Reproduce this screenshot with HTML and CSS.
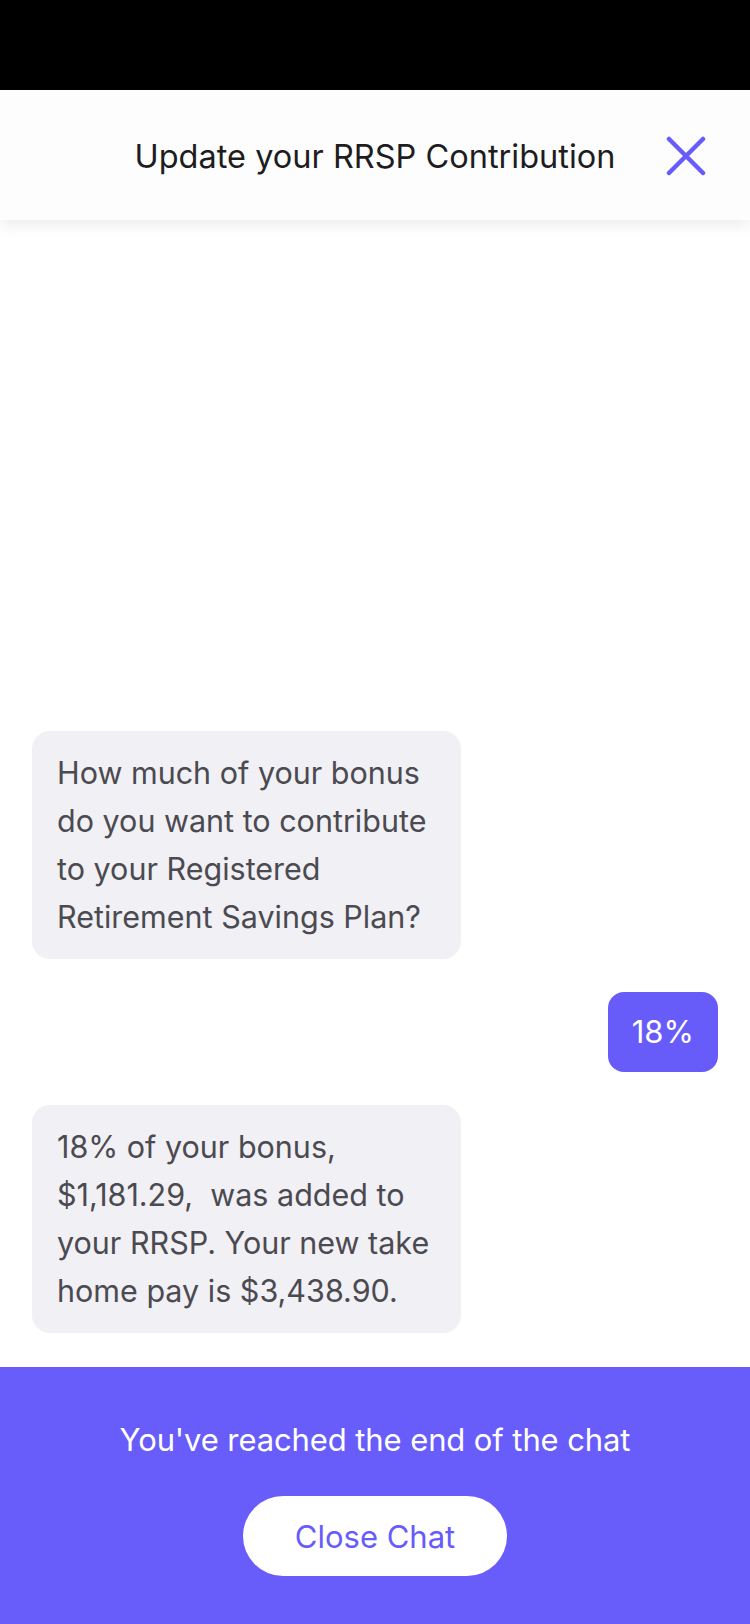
FILE: index.html
```html
<!DOCTYPE html>
<html lang="en">
<head>
<meta charset="utf-8">
<title>Update your RRSP Contribution</title>
<link rel="stylesheet" href="styles.css">
</head>
<body>
<div class="screen">
  <div class="status-bar"></div>
  <header class="header">
    <h1 class="title">Update your RRSP Contribution</h1>
    <button class="close-btn" aria-label="Close">
      <svg viewBox="0 0 40 40" width="40" height="40">
        <path d="M3 3 L37 37 M37 3 L3 37" stroke="#675cfa" stroke-width="4.5" stroke-linecap="round" fill="none"/>
      </svg>
    </button>
  </header>
  <main class="chat">
    <div class="msg bot">How much of your bonus do you want to contribute to your Registered Retirement Savings Plan?</div>
    <div class="msg user">18%</div>
    <div class="msg bot">18% of your bonus, $1,181.29,&nbsp; was added to your RRSP. Your new take home pay is $3,438.90.</div>
  </main>
  <footer class="footer">
    <p class="end-text">You've reached the end of the chat</p>
    <button class="close-chat">Close Chat</button>
  </footer>
</div>
</body>
</html>
```

FILE: styles.css
```css
* { box-sizing: border-box; }
html, body { margin: 0; padding: 0; }
body {
  font-family: Inter, "Noto Sans", "Liberation Sans", sans-serif;
  background: #ffffff;
}
.screen {
  width: 750px;
  height: 1624px;
  display: flex;
  flex-direction: column;
  overflow: hidden;
}
.status-bar {
  height: 90px;
  background: #000;
  flex: none;
}
.header {
  height: 130px;
  flex: none;
  background: #fdfdfd;
  box-shadow: 0 6px 14px rgba(0,0,0,0.07);
  display: flex;
  align-items: center;
  justify-content: center;
  position: relative;
  z-index: 1;
}
.title {
  margin: 0;
  font-weight: 400;
  font-size: 32.5px;
  color: #1d1d1f;
  padding-top: 2px;
}
.close-btn {
  position: absolute;
  right: 44px;
  top: 46px;
  width: 40px;
  height: 40px;
  padding: 0;
  border: 0;
  background: none;
}
.close-btn svg { display: block; }
.chat {
  flex: 1;
  display: flex;
  flex-direction: column;
  justify-content: flex-end;
  gap: 33px;
  padding: 0 32px 34px;
}
.msg {
  font-size: 30.5px;
  line-height: 48px;
  border-radius: 18px;
}
.bot {
  align-self: flex-start;
  width: 429px;
  padding: 18px 25px;
  background: #f1f0f5;
  color: #4b4a51;
}
.user {
  align-self: flex-end;
  padding: 16px 24px;
  font-size: 31px;
  background: #675cfa;
  color: #ffffff;
  border-radius: 16px;
}
.footer {
  height: 257px;
  flex: none;
  background: #685dfa;
  display: flex;
  flex-direction: column;
  align-items: center;
  padding-top: 52px;
}
.end-text {
  margin: 0;
  color: #ffffff;
  font-size: 31px;
  line-height: 42px;
  letter-spacing: -0.1px;
}
.close-chat {
  margin-top: 35px;
  width: 264px;
  height: 80px;
  border: 0;
  border-radius: 40px;
  background: #ffffff;
  color: #675cfa;
  font-family: Inter, "Noto Sans", "Liberation Sans", sans-serif;
  font-size: 31px;
}
```
